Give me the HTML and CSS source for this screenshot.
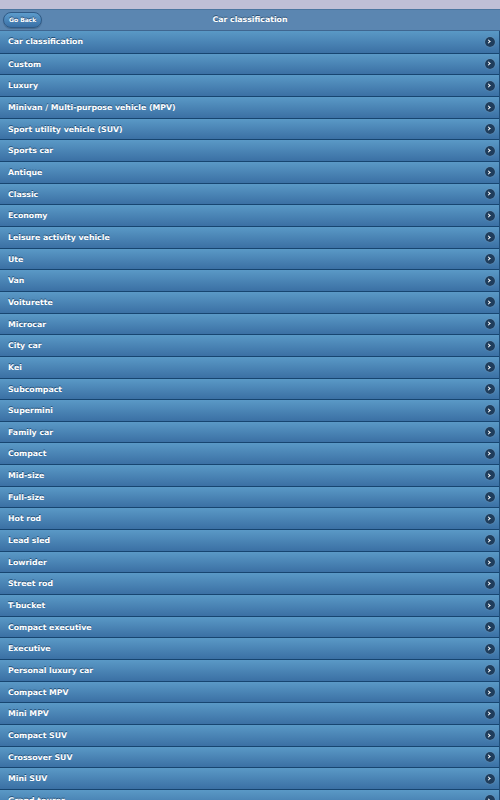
FILE: index.html
```html
<!DOCTYPE html>
<html lang="en">
<head>
    <meta charset="UTF-8">
    <meta name="viewport" content="width=device-width, initial-scale=1.0">
    <title>Car classification</title>
    <link rel="stylesheet" href="styles.css">
</head>
<body>
    <div class="status"></div>
    <div class="header">
        <a class="back">Go Back</a>
        <h1>Car classification</h1>
    </div>
    <ul class="list">
        <li>Car classification</li>
        <li>Custom</li>
        <li>Luxury</li>
        <li>Minivan / Multi-purpose vehicle (MPV)</li>
        <li>Sport utility vehicle (SUV)</li>
        <li>Sports car</li>
        <li>Antique</li>
        <li>Classic</li>
        <li>Economy</li>
        <li>Leisure activity vehicle</li>
        <li>Ute</li>
        <li>Van</li>
        <li>Voiturette</li>
        <li>Microcar</li>
        <li>City car</li>
        <li>Kei</li>
        <li>Subcompact</li>
        <li>Supermini</li>
        <li>Family car</li>
        <li>Compact</li>
        <li>Mid-size</li>
        <li>Full-size</li>
        <li>Hot rod</li>
        <li>Lead sled</li>
        <li>Lowrider</li>
        <li>Street rod</li>
        <li>T-bucket</li>
        <li>Compact executive</li>
        <li>Executive</li>
        <li>Personal luxury car</li>
        <li>Compact MPV</li>
        <li>Mini MPV</li>
        <li>Compact SUV</li>
        <li>Crossover SUV</li>
        <li>Mini SUV</li>
        <li>Grand tourer</li>
    </ul>
</body>
</html>
```

FILE: styles.css
```css
body{
    margin: 0;
    font-family: "DejaVu Sans", sans-serif;
    background: #dddddd;
    overflow: hidden;
}
.status{
    height: 9px;
    background: #bfbfd6;
}
.header{
    position: relative;
    height: 20px;
    background: #5b86b1;
    border-top: 1px solid #4b76a0;
    border-bottom: 1px solid #3f6690;
    display: flex;
    align-items: center;
    justify-content: center;
}
.header h1{
    margin: 0 0 1px;
    color: white;
    font-size: 7.8px;
    font-weight: bold;
    text-shadow: 0 -1px 0 #2c4f72;
}
.back{
    position: absolute;
    left: 3px;
    top: 2px;
    height: 14px;
    padding: 0 5px;
    line-height: 14px;
    border: 1px solid #2f5a86;
    border-radius: 9px;
    background: linear-gradient(#5d9ccc, #3a70a6);
    color: white;
    font-size: 6px;
    font-weight: bold;
    text-shadow: 0 -1px 0 #1d4670;
    box-shadow: 0 1px 1px rgba(0,0,0,0.2);
}
.list{
    list-style: none;
    margin: 0;
    padding: 0;
    border-right: 1px solid #1f4d78;
}
.list li{
    position: relative;
    height: 19.67px;
    padding-top: 1px;
    line-height: 20.67px;
    padding-left: 8px;
    border-top: 1px solid #174570;
    background: linear-gradient(#5a99c6, #3b70a4);
    color: white;
    font-size: 7.8px;
    font-weight: bold;
    text-shadow: 0 -1px 0 #1c4b74;
}
.list li:first-child{
    border-top: none;
    height: 20.67px;
}
.list li::after{
    content: "";
    position: absolute;
    right: 4px;
    top: 50%;
    width: 10px;
    height: 10px;
    margin-top: -5px;
    border-radius: 50%;
    background: #1f3d5c;
    box-shadow: 0 0 1px rgba(255,255,255,0.4);
}
.list li::before{
    content: "";
    position: absolute;
    right: 9px;
    top: 50%;
    width: 2px;
    height: 2px;
    margin-top: -1.5px;
    border-top: 1.5px solid white;
    border-right: 1.5px solid white;
    transform: rotate(45deg);
    z-index: 1;
}
```
